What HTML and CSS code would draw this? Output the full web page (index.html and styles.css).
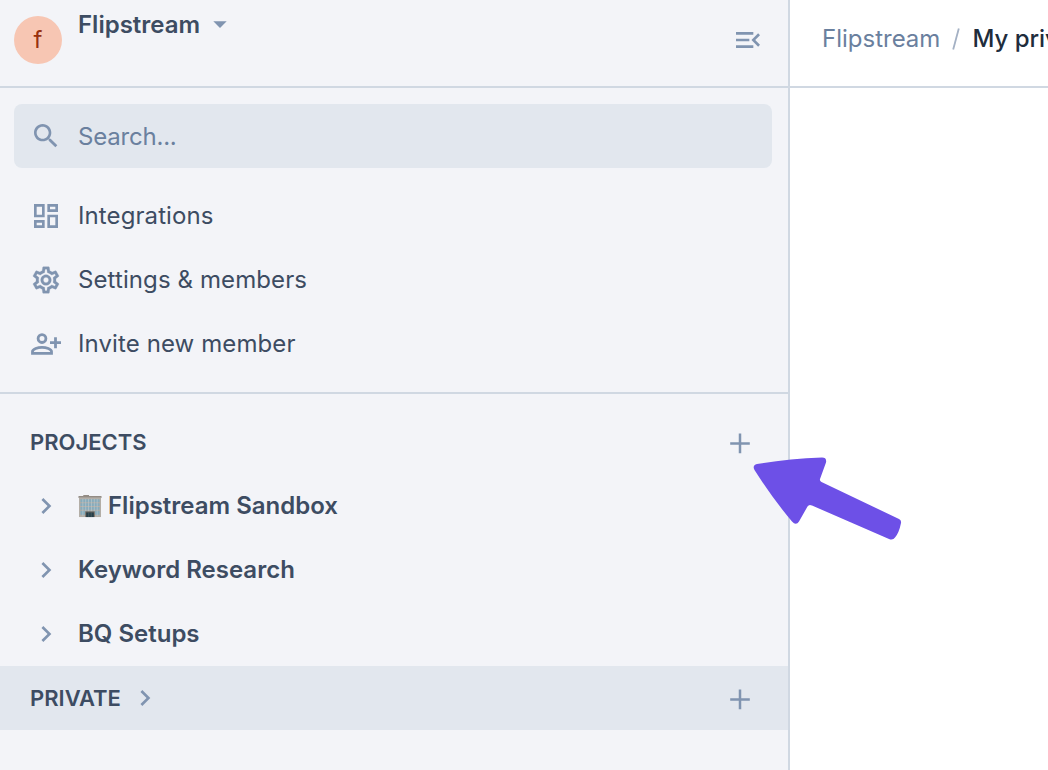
FILE: index.html
```html
<!DOCTYPE html>
<html lang="en">
<head>
    <meta charset="UTF-8">
    <meta name="viewport" content="width=device-width, initial-scale=1.0">
    <title>Flipstream</title>
    <link rel="stylesheet" href="styles.css">
</head>
<body>
    <div class="app">
        <aside class="sidebar">
            <header class="workspace">
                <div class="avatar">f</div>
                <div class="workspace-name">
                    <span>Flipstream</span>
                    <svg class="icon" viewBox="0 0 24 24"><path d="M7 10l5 5 5-5z"/></svg>
                </div>
                <svg class="icon" viewBox="0 0 24 24"><path d="M3 18h13v-2H3v2zM3 6v2h13V6H3zm0 7h10v-2H3v2zm18 2.59L17.42 12 21 8.41 19.59 7l-5 5 5 5L21 15.59z"/></svg>
            </header>

            <nav class="menu">
                <div class="menu-item search">
                    <svg class="icon" viewBox="0 0 24 24"><path d="M15.5 14h-.79l-.28-.27C15.41 12.59 16 11.11 16 9.5 16 5.91 13.09 3 9.5 3S3 5.91 3 9.5 5.91 16 9.5 16c1.61 0 3.09-.59 4.23-1.57l.27.28v.79l5 4.99L20.49 19l-4.99-5zm-6 0C7.01 14 5 11.99 5 9.5S7.01 5 9.5 5 14 7.01 14 9.5 11.99 14 9.5 14z"/></svg>
                    <span class="search-text">Search...</span>
                </div>
                <div class="menu-item">
                    <svg class="icon" viewBox="0 0 24 24"><path d="M19 5v2h-4V5h4M9 5v6H5V5h4m10 8v6h-4v-6h4M9 17v2H5v-2h4M21 3h-8v6h8V3zM11 3H3v10h8V3zm10 8h-8v10h8V11zm-10 4H3v6h8v-6z"/></svg>
                    <span>Integrations</span>
                </div>
                <div class="menu-item">
                    <svg class="icon icon-bold" viewBox="0 0 24 24"><path d="M19.43 12.98c.04-.32.07-.64.07-.98 0-.34-.03-.66-.07-.98l2.11-1.65c.19-.15.24-.42.12-.64l-2-3.46c-.09-.16-.26-.25-.44-.25-.06 0-.12.01-.17.03l-2.49 1c-.52-.4-1.08-.73-1.69-.98l-.38-2.65C14.46 2.18 14.25 2 14 2h-4c-.25 0-.46.18-.49.42l-.38 2.65c-.61.25-1.17.59-1.69.98l-2.49-1c-.06-.02-.12-.03-.18-.03-.17 0-.34.09-.43.25l-2 3.46c-.13.22-.07.49.12.64l2.11 1.65c-.04.32-.07.65-.07.98 0 .33.03.66.07.98l-2.11 1.65c-.19.15-.24.42-.12.64l2 3.46c.09.16.26.25.44.25.06 0 .12-.01.17-.03l2.49-1c.52.4 1.08.73 1.69.98l.38 2.65c.03.24.24.42.49.42h4c.25 0 .46-.18.49-.42l.38-2.65c.61-.25 1.17-.59 1.69-.98l2.49 1c.06.02.12.03.18.03.17 0 .34-.09.43-.25l2-3.46c.12-.22.07-.49-.12-.64l-2.11-1.65zm-1.98-1.71c.04.31.05.52.05.73 0 .21-.02.43-.05.73l-.14 1.13.89.7 1.08.84-.7 1.21-1.27-.51-1.04-.42-.9.68c-.43.32-.84.56-1.25.73l-1.06.43-.16 1.13-.2 1.35h-1.4l-.19-1.35-.16-1.13-1.06-.43c-.43-.18-.83-.41-1.23-.71l-.91-.7-1.06.43-1.27.51-.7-1.21 1.08-.84.89-.7-.14-1.13c-.03-.31-.05-.54-.05-.74s.02-.43.05-.73l.14-1.13-.89-.7-1.08-.84.7-1.21 1.27.51 1.04.42.9-.68c.43-.32.84-.56 1.25-.73l1.06-.43.16-1.13.2-1.35h1.39l.19 1.35.16 1.13 1.06.43c.43.18.83.41 1.23.71l.91.7 1.06-.43 1.27-.51.7 1.21-1.07.85-.89.7.14 1.13zM12 8c-2.21 0-4 1.79-4 4s1.79 4 4 4 4-1.79 4-4-1.79-4-4-4zm0 6c-1.1 0-2-.9-2-2s.9-2 2-2 2 .9 2 2-.9 2-2 2z"/></svg>
                    <span>Settings &amp; members</span>
                </div>
                <div class="menu-item">
                    <svg class="icon icon-line" viewBox="0 0 32 32">
                        <circle cx="12" cy="10.6" r="3.9"/>
                        <path d="M2.5 25.3v-1.7c0-2.6 5.300-4.300 9.500-4.300s9.500 1.700 9.500 4.300v1.700zM20 14.700h11M25.500 9.200v11"/>
                    </svg>
                    <span>Invite new member</span>
                </div>
            </nav>

            <section class="projects">
                <div class="section-title">
                    <span>PROJECTS</span>
                    <svg class="icon icon-line add" viewBox="0 0 32 32"><path d="M6.2 17.4h19.600M16 7.600v19.600"/></svg>
                </div>
                <div class="project">
                    <svg class="icon" viewBox="0 0 24 24"><path d="M10 6L8.59 7.41 13.17 12l-4.58 4.59L10 18l6-6z"/></svg>
                    <svg class="building" viewBox="0 0 24 24">
                        <path fill="#938c85" d="M0 1h5V0h6v1h13v2H0z"/>
                        <path fill="#b3aea7" d="M.5 2.500h23V23H.5z"/>
                        <path fill="#86acbd" d="M2 4.500h20v3H2zM2 8.500h20v3H2zM2 12.500h20v3H2zM2 16.500h20v4H2z"/>
                        <path stroke="#b7c4ca" stroke-width=".8" d="M4.500 4v18M7.500 4v18M10.500 4v18M13.500 4v18M16.500 4v18M19.500 4v18"/>
                        <path fill="#75695f" d="M7 17h10v6H7z"/>
                        <path fill="#263e49" d="M8 18.200h8V23H8z"/>
                        <path stroke="#52666b" stroke-width=".7" d="M10.700 18.200V23M13.300 18.200V23"/>
                    </svg>
                    <span>Flipstream Sandbox</span>
                </div>
                <div class="project">
                    <svg class="icon" viewBox="0 0 24 24"><path d="M10 6L8.59 7.41 13.17 12l-4.58 4.59L10 18l6-6z"/></svg>
                    <span>Keyword Research</span>
                </div>
                <div class="project">
                    <svg class="icon" viewBox="0 0 24 24"><path d="M10 6L8.59 7.41 13.17 12l-4.58 4.59L10 18l6-6z"/></svg>
                    <span>BQ Setups</span>
                </div>
                <div class="section-title private">
                    <span>PRIVATE</span>
                    <svg class="icon" viewBox="0 0 24 24"><path d="M10 6L8.59 7.41 13.17 12l-4.58 4.59L10 18l6-6z"/></svg>
                    <svg class="icon icon-line add" viewBox="0 0 32 32"><path d="M6.2 17.4h19.600M16 7.600v19.600"/></svg>
                </div>
            </section>
        </aside>

        <main class="content">
            <header class="breadcrumb">
                <span class="crumb">Flipstream</span>
                <svg class="slash" viewBox="0 0 8 24"><path d="M1.2 22.500L6.800 1.500"/></svg>
                <span class="current">My priv</span>
            </header>
        </main>

        <svg class="pointer" viewBox="0 0 156 90">
            <path d="M7 10Q37 5 72 3.500Q77 3.500 76 8.500L70 25Q69.500 27 71.500 28L149 65Q151.500 66 151 69Q149 79 145 83.500Q143 86.500 139 85L62 51.500Q59 50 57.500 52.500L49 67.500Q46 72 42 67.500Q23 45 4.500 16Q2 11.500 7 10Z"/>
        </svg>
    </div>
</body>
</html>
```
FILE: styles.css
```css
* {
    margin: 0;
    padding: 0;
    box-sizing: border-box;
}

body {
    font-family: Inter, 'Liberation Sans', sans-serif;
    font-size: 24px;
    line-height: 32px;
    color: #3d4c62;
    background: white;
    overflow: hidden;
}

.app {
    position: relative;
    display: flex;
    height: 100vh;
}

.sidebar {
    width: 790px;
    flex-shrink: 0;
    background: #f3f4f8;
    border-right: 2px solid #d0d8e2;
}

.workspace {
    display: flex;
    height: 88px;
    padding: 8px 24px 0 14px;
    border-bottom: 2px solid #d0d8e2;
}

.workspace > .icon {
    margin-top: 16px;
}

.avatar {
    width: 48px;
    height: 48px;
    margin: 8px 16px 0 0;
    border-radius: 50%;
    background: #f7c6b3;
    color: #98310f;
    line-height: 48px;
    text-align: center;
}

.workspace-name {
    display: flex;
    flex: 1;
    gap: 4px;
    font-weight: 600;
}

.workspace-name span {
    padding-top: 1px;
}

.icon {
    width: 32px;
    height: 32px;
    flex-shrink: 0;
    fill: #8094b0;
}

.icon-bold {
    stroke: #8094b0;
    stroke-width: 0.2;
}

.icon-line {
    fill: none;
    stroke: #8094b0;
    stroke-width: 2.8;
}

.menu {
    padding: 16px 16px 16px 14px;
    border-bottom: 2px solid #d0d8e2;
}

.menu-item {
    display: flex;
    align-items: center;
    gap: 16px;
    height: 64px;
    padding-left: 16px;
    letter-spacing: 0.1px;
}

.search {
    margin-bottom: 16px;
    border-radius: 8px;
    background: #e2e7ee;
    color: #6a809e;
    letter-spacing: -0.2px;
}

.search-text {
    padding-top: 2px;
}

.projects {
    padding-top: 16px;
}

.section-title {
    display: flex;
    align-items: center;
    height: 64px;
    padding: 0 32px 0 30px;
    font-size: 22px;
    font-weight: 600;
}

.section-title .add {
    margin-left: auto;
    stroke-width: 2.5;
}

.private {
    gap: 8px;
    background: #e2e7ee;
}

.project {
    display: flex;
    align-items: center;
    height: 64px;
    padding-left: 30px;
    font-weight: 600;
}

.project .icon {
    margin-right: 16px;
}

.building {
    width: 24px;
    height: 23px;
    margin-right: 6px;
}

.content {
    flex: 1;
    min-width: 0;
    overflow: hidden;
}

.breadcrumb {
    display: flex;
    align-items: center;
    height: 88px;
    padding: 0 0 8px 32px;
    border-bottom: 2px solid #d0d8e2;
    white-space: nowrap;
}

.crumb {
    color: #6a809e;
}

.slash {
    width: 8px;
    height: 24px;
    margin: 0 12px;
    flex-shrink: 0;
    stroke: #a4b1c4;
    stroke-width: 1.8;
}

.current {
    color: #202c3c;
    font-weight: 500;
}

.pointer {
    position: absolute;
    left: 750px;
    top: 454px;
    width: 156px;
    height: 90px;
    fill: #6d50e7;
}
```
